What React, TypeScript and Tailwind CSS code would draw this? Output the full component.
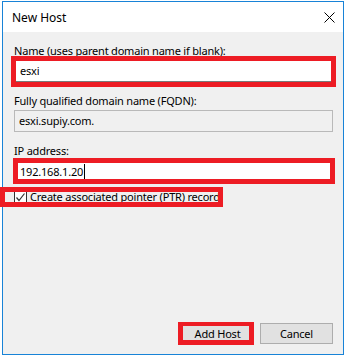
import React from "react";

const font = { fontFamily: '"Noto Sans", "Open Sans", sans-serif', letterSpacing: "-0.2px" };

function RedBox({ className }: { className: string }) {
  return <div className={`pointer-events-none absolute border-[5px] border-[#ed1c24] ${className}`} />;
}

export default function App() {
  return (
    <div className="w-[346px] h-[358px] bg-white pt-[1px] pl-[2px] text-[11px] leading-[16px] text-black" style={font}>
      <div className="w-[342px] h-[354px] border border-[#1883d7] flex flex-col">
        <div className="h-[30px] bg-white flex items-center justify-between pl-[9px] pr-[8px]">
          <span className="mt-[1px] text-[12px] tracking-normal">New Host</span>
          <svg width="11" height="11" viewBox="0 0 11 11" className="mt-[1px]">
            <path d="M0.5 0.5 L10.5 10.5 M10.5 0.5 L0.5 10.5" stroke="#000" strokeWidth="1" />
          </svg>
        </div>
        <div className="flex-1 bg-[#f0f0f0] flex flex-col px-[11px]">
          <div className="mt-[11px]">Name (uses parent domain name if blank):</div>
          <div className="relative mt-0 w-[319px]">
            <div className="h-[23px] bg-white border border-[#7a7a7a] flex items-center pl-[5px]">esxi</div>
            <RedBox className="-left-[3px] -right-[3px] -top-[3px] -bottom-[5px]" />
          </div>
          <div className="mt-[11px]">Fully qualified domain name (FQDN):</div>
          <div className="mt-[1px] w-[319px] h-[22px] border border-[#b9b9b9] flex items-center pl-[4px]">esxi.supiy.com.</div>
          <div className="mt-[11px]">IP address:</div>
          <div className="relative mt-[1px] w-[319px]">
            <div className="h-[23px] bg-white border border-[#7a7a7a] flex items-center pl-[5px]">
              <span>192.168.1.20</span>
              <span className="inline-block w-[1px] h-[15px] bg-black ml-[1px]" />
            </div>
            <RedBox className="-left-[1px] -right-[2px] -top-[2px] -bottom-[1px]" />
          </div>
          <div className="relative mt-[6px] flex items-center gap-[3px]">
            <div className="w-[13px] h-[13px] border border-[#333] bg-white flex items-center justify-center">
              <svg width="11" height="11" viewBox="0 0 11 11">
                <path d="M1.5 5.5 L4 8.5 L9.5 1.5" stroke="#333" strokeWidth="1.2" fill="none" />
              </svg>
            </div>
            <span>Create associated pointer (PTR) record</span>
            <div className="pointer-events-none absolute left-[-14px] w-[223px] top-[-2px] h-[20px] border-[5px] border-[#ed1c24]" />
          </div>
          <div className="mt-auto mb-[10px] -mr-[1px] flex justify-end gap-[6px]">
            <div className="relative">
              <button className="w-[73px] h-[21px] bg-[#e1e1e1] border border-[#adadad] text-[11px]" style={font}>Add Host</button>
              <RedBox className="-left-[3px] right-0 -top-[1px] -bottom-[1px] border-t-[4px]" />
            </div>
            <button className="w-[73px] h-[21px] bg-[#e1e1e1] border border-[#adadad] text-[11px]" style={font}>Cancel</button>
          </div>
        </div>
      </div>
    </div>
  );
}
